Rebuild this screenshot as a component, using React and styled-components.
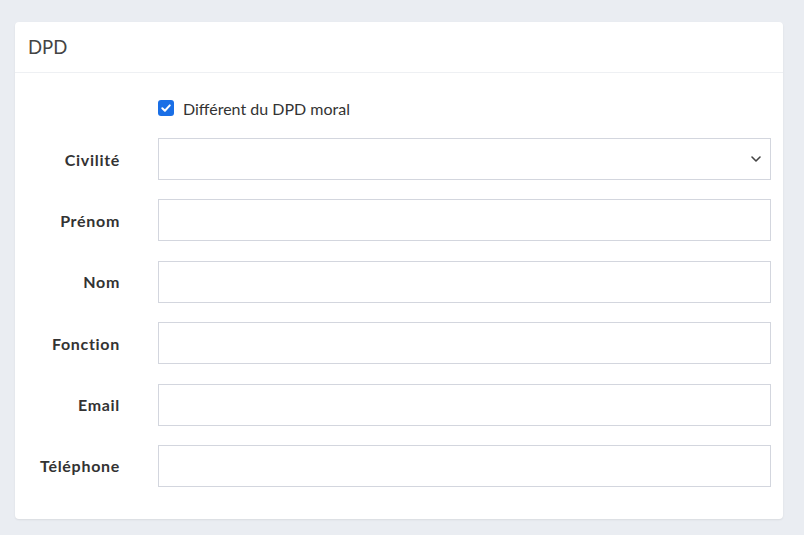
import React from "react";
import styled, { createGlobalStyle } from "styled-components";

const Global = createGlobalStyle`
  html, body { margin: 0; padding: 0; background: #eaedf2; }
  body { font-family: "Lato", "Noto Sans", sans-serif; color: #333; }
  * { box-sizing: border-box; }
`;

const Page = styled.div`
  padding: 22px 21px 16px 15px;
  min-height: 535px;
`;

const Card = styled.section`
  background: #fff;
  border-radius: 4px;
  box-shadow: 0 1px 2px rgba(0, 0, 0, 0.08);
`;

const Header = styled.header`
  height: 51px;
  display: flex;
  align-items: center;
  padding: 0 13px;
  border-bottom: 1px solid #eef0f3;
  font-size: 18.5px;
  color: #444;
`;

const Body = styled.div`
  padding: 23px 12px 32px 0;
  display: grid;
  grid-template-columns: 105px 1fr;
  column-gap: 38px;
  row-gap: 19.4px;
  align-items: center;
`;

const CheckRow = styled.label`
  grid-column: 2;
  display: flex;
  align-items: center;
  gap: 9px;
  height: 24px;
  margin-bottom: -1.4px;
  font-size: 16px;
  color: #333;
`;

const Box = styled.span`
  width: 16px;
  height: 16px;
  border-radius: 3px;
  background: #1a6fe6;
  display: inline-flex;
  align-items: center;
  justify-content: center;
`;

const Label = styled.label`
  text-align: right;
  font-weight: 700;
  font-size: 16px;
  letter-spacing: 0.7px;
  color: #333;
`;

const Field = styled.div`
  position: relative;
  height: 42px;
  border: 1px solid #d3d6de;
  background: #fff;
`;

const Chevron = styled.svg`
  position: absolute;
  right: 8px;
  top: 50%;
  transform: translateY(-50%);
`;

const fields = ["Prénom", "Nom", "Fonction", "Email", "Téléphone"];

export default function App() {
  return (
    <Page>
      <Global />
      <Card>
        <Header>DPD</Header>
        <Body>
          <CheckRow>
            <Box>
              <svg width="12" height="12" viewBox="0 0 12 12">
                <path d="M2.3 6.2 L4.9 8.7 L9.8 3.4" fill="none" stroke="#fff" strokeWidth="2" strokeLinecap="round" strokeLinejoin="round" />
              </svg>
            </Box>
            Différent du DPD moral
          </CheckRow>
          <Label>Civilité</Label>
          <Field>
            <Chevron width="12" height="12" viewBox="0 0 12 12">
              <path d="M2 4 L6 8 L10 4" fill="none" stroke="#444" strokeWidth="1.6" strokeLinecap="round" strokeLinejoin="round" />
            </Chevron>
          </Field>
          {fields.map((f) => (
            <React.Fragment key={f}>
              <Label>{f}</Label>
              <Field />
            </React.Fragment>
          ))}
        </Body>
      </Card>
    </Page>
  );
}
